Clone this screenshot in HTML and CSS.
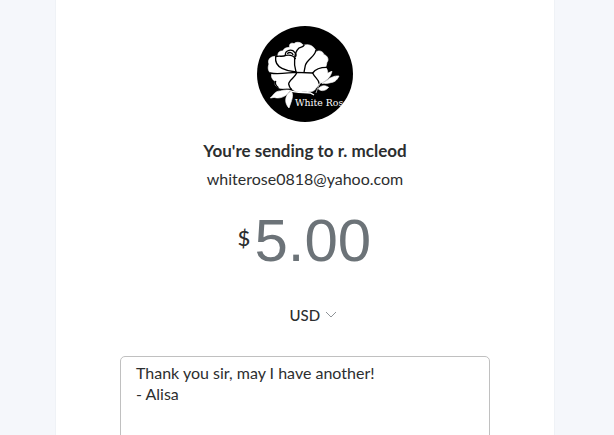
FILE: index.html
```html
<!DOCTYPE html>
<html lang="en">
<head>
<meta charset="utf-8">
<title>Send money</title>
<link rel="stylesheet" href="styles.css">
</head>
<body>
<main class="panel">
  <svg class="avatar" viewBox="21 18 288 288" role="img" aria-label="White Rose">
    <defs><clipPath id="disc"><circle cx="165" cy="162" r="144"/></clipPath></defs>
    <g clip-path="url(#disc)">
      <rect x="21" y="18" width="288" height="288" fill="#000"/>
      <g fill="#fff" stroke="#fff" stroke-width="2">
        <path d="M119 82C116 72 124 67 132 71C140 64 154 66 160 76C174 71 187 76 194 86C198 91 198 95 198 97C204 89 220 93 222 104C232 106 238 119 231 127C229 134 229 139 227 142C234 150 234 160 232 167C226 175 215 181 209 187C208 196 199 202 194 210C184 219 166 214 154 216C139 217 131 212 124 205C105 204 91 209 81 200C74 197 75 190 76 184C66 179 63 170 65 161C53 154 53 142 57 132C52 122 59 109 76 109L84 109C82 97 90 92 98 93C102 85 110 82 119 82Z"/>
        <path d="M211 190C212 174 228 160 246 154C242 170 231 182 216 188Z"/>
        <path d="M216 190C229 185 236 174 250 170C258 167 264 168 267 168C260 184 250 187 242 188C232 191 226 190 216 190Z"/>
        <path d="M205 207C212 196 224 194 236 202C226 213 215 215 205 207Z"/>
        <path d="M61 234C71 225 74 213 91 213C101 210 111 209 120 211C113 226 94 237 76 233C71 231 67 234 61 234Z"/>
        <path d="M124 214C132 226 125 241 117 264C105 252 103 233 116 219Z"/>
      </g>
      <g fill="none" stroke="#000" stroke-width="4" stroke-linecap="round">
        <path d="M77 111C75 126 82 138 96 145C110 152 125 155 138 156"/>
        <path d="M77 110C88 106 98 112 107 106C119 104 130 106 136 116"/>
        <path d="M106 104C106 90 126 86 134 97C138 101 140 104 137 109M113 100C118 96 126 97 129 104"/>
        <path d="M138 156C130 128 132 98 147 84C154 80 158 82 162 76"/>
        <path d="M197 92C196 108 171 119 166 136L162 157"/>
        <path d="M61 159C84 164 114 158 138 157L188 159C198 145 212 142 230 142"/>
        <path d="M140 158C137 171 116 181 116 192C118 202 122 206 124 208M188 159C194 173 207 178 207 190"/>
        <path d="M77 184C74 191 79 199 84 202"/>
      </g>
      <path d="M118 212C140 220 163 216 181 219L192 225" fill="none" stroke="#fff" stroke-width="4"/>
      <path d="M214 181C207 196 202 206 198 219" fill="none" stroke="#fff" stroke-width="2"/>
      <text class="avatar-text" x="135" y="257">White Rose</text>
    </g>
  </svg>
  <h1 class="recipient">You're sending to r. mcleod</h1>
  <p class="email">whiterose0818@yahoo.com</p>
  <form class="form">
    <div class="amount">
      <label class="symbol" for="amount">$</label>
      <input class="value" id="amount" type="text" inputmode="decimal" value="5.00">
    </div>
    <div class="currency">
      <select class="code" aria-label="Currency"><option>USD</option></select>
      <svg class="chevron" viewBox="0 0 12 8" aria-hidden="true"><path d="M1 1L6 6L11 1"/></svg>
    </div>
    <textarea class="note" aria-label="Note">Thank you sir, may I have another!
- Alisa</textarea>
  </form>
</main>
</body>
</html>
```
FILE: styles.css
```css
* {
  box-sizing: border-box;
}

body {
  margin: 0;
  min-height: 100vh;
  padding: 0 60px 0 56px;
  background: #f5f7fb;
  color: #2c2e2f;
  font-family: Lato, "Noto Sans", sans-serif;
  font-size: 16px;
}

.panel {
  display: flex;
  flex-direction: column;
  align-items: center;
  height: 100vh;
  overflow: hidden;
  padding: 26px 64px 0;
  background: #fff;
  box-shadow: 0 0 1px #d5d8de;
}

.avatar {
  flex: none;
  width: 96px;
  height: 96px;
}

.avatar-text {
  fill: #fff;
  font-family: "DejaVu Serif", serif;
  font-size: 28px;
}

.recipient {
  margin: 17px 0 0;
  font-size: 17px;
  line-height: 24px;
}

.email {
  margin: 4px 0 0;
  line-height: 24px;
}

.form {
  display: flex;
  flex-direction: column;
  align-items: center;
  width: 100%;
}

.amount {
  display: flex;
  align-items: flex-start;
  gap: 4px;
  margin-top: 15px;
  margin-left: 2px;
}

.symbol {
  padding-top: 16px;
  font-size: 22px;
  font-weight: 500;
  line-height: 32px;
}

.value {
  width: 120px;
  height: 68px;
  padding: 0;
  border: 0;
  background: none;
  color: #6c7378;
  font-family: "Liberation Sans", Arial, sans-serif;
  font-size: 60px;
}

.currency {
  display: flex;
  align-items: center;
  gap: 4px;
  margin-top: 29px;
  margin-left: 16px;
}

.code {
  appearance: none;
  padding: 0;
  border: 0;
  background: none;
  color: inherit;
  font-family: inherit;
  font-size: 15px;
  font-weight: 500;
  line-height: 24px;
}

.chevron {
  width: 12px;
  height: 8px;
  fill: none;
  stroke: #8f9498;
}

.note {
  width: 100%;
  height: 120px;
  margin-top: 29px;
  padding: 5px 15px;
  border: 1px solid #c0c0c0;
  border-radius: 5px;
  resize: none;
  background: #fff;
  color: inherit;
  font-family: inherit;
  font-size: 16px;
  line-height: 21px;
}
```
